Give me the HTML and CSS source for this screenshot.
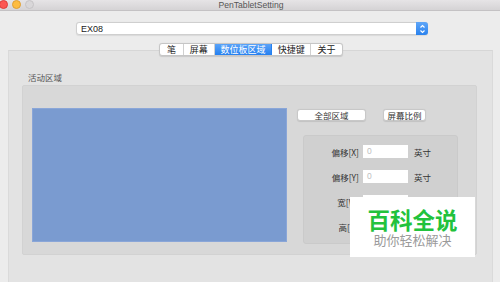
FILE: index.html
```html
<!DOCTYPE html>
<html lang="zh">
<head>
<meta charset="utf-8">
<link rel="stylesheet" href="styles.css">
</head>
<body>
<div class="window">
  <div class="titlebar">
    <div class="lights">
      <span class="light red"></span>
      <span class="light yellow"></span>
      <span class="light grey"></span>
    </div>
    <div class="title">PenTabletSetting</div>
    <div></div>
  </div>
  <div class="content">
    <div class="select">
      <span class="select-text">EX08</span>
      <span class="stepper">
        <svg width="11" height="12" viewBox="0 0 11 12"><path d="M3.5 4.5 L5.5 2.5 L7.5 4.5 M3.5 7.5 L5.5 9.5 L7.5 7.5" fill="none" stroke="#fff" stroke-width="1.1"/></svg>
      </span>
    </div>
    <div class="panel">
      <div class="tabs">
        <span class="tab t1">笔</span>
        <span class="tab t2">屏幕</span>
        <span class="tab t3 active">数位板区域</span>
        <span class="tab t4">快捷键</span>
        <span class="tab t5">关于</span>
      </div>
      <div class="group-label">活动区域</div>
      <div class="group">
        <div class="area"></div>
        <div class="side">
          <div class="buttons">
            <span class="btn b1">全部区域</span>
            <span class="btn b2">屏幕比例</span>
          </div>
          <div class="settings">
            <span class="lbl">偏移[X]</span><span class="inp">0</span><span class="unit">英寸</span>
            <span class="lbl">偏移[Y]</span><span class="inp">0</span><span class="unit">英寸</span>
            <span class="lbl">宽[W]</span><span class="inp"></span><span class="unit">英寸</span>
            <span class="lbl">高[H]</span><span class="inp"></span><span class="unit"></span>
          </div>
        </div>
      </div>
    </div>
  </div>
</div>
<div class="watermark">
  <div class="wm-main">百科全说</div>
  <div class="wm-sub">助你轻松解决</div>
</div>
</body>
</html>
```

FILE: styles.css
```css
* { box-sizing: border-box; }
html, body { margin: 0; padding: 0; }
body {
  width: 500px;
  height: 282px;
  overflow: hidden;
  background: #ececec;
  font-family: "Liberation Sans", "Noto Sans CJK SC", sans-serif;
  position: relative;
}
.window { width: 500px; height: 282px; }
.titlebar {
  height: 11px;
  display: grid;
  grid-template-columns: 1fr auto 1fr;
  align-items: center;
  background: linear-gradient(#e6e4e6, #d5d3d5);
  border-bottom: 1px solid #c4c2c4;
}
.lights { display: flex; gap: 4px; margin-left: -1px; align-items: center; margin-top: -1px; }
.light { width: 9px; height: 9px; border-radius: 50%; display: block; }
.red { background: #fc5753; border: 0.5px solid #de3d3a; }
.yellow { background: #fdbc40; border: 0.5px solid #de9f34; }
.grey { background: #d9d7d9; border: 0.5px solid #c6c4c6; }
.title {
  font-size: 8.6px;
  color: #555;
  margin-top: -1px;
  padding-left: 2px;
}
.content { padding-top: 11px; }
.select {
  margin-left: 76px;
  width: 352px;
  height: 13px;
  background: #fff;
  border: 1px solid #cfcfcf;
  border-radius: 3px;
  display: flex;
  align-items: center;
  justify-content: space-between;
  box-shadow: 0 0.5px 1px rgba(0,0,0,0.08);
}
.select-text { font-size: 9px; color: #222; padding-left: 4px; }
.stepper {
  width: 12px;
  height: 13px;
  margin-right: -1px;
  background: linear-gradient(#5fa6f8, #2a82ee);
  border-radius: 0 3px 3px 0;
  display: flex;
  align-items: center;
  justify-content: center;
}
.panel {
  margin: 15px 7px 0 8px;
  height: 240px;
  background: #e3e3e3;
  border-top: 1px solid #d6d6d6;
  border-left: 1px solid #dadada;
  border-right: 1px solid #dadada;
}
.tabs {
  margin: -8px 0 0 150px;
  display: flex;
  width: 184px;
  height: 13px;
  background: #fff;
  border: 1px solid #c6c6c6;
  border-radius: 3px;
  overflow: hidden;
  box-shadow: 0 0.5px 1px rgba(0,0,0,0.12);
}
.tab {
  font-family: "Noto Sans CJK SC", sans-serif;
  font-size: 9px;
  line-height: 11px;
  color: #222;
  text-align: center;
  border-right: 1px solid #d0d0d0;
}
.tab:last-child { border-right: none; }
.t1 { width: 24px; }
.t2 { width: 31px; }
.t3 { width: 58px; }
.t4 { width: 39px; }
.t5 { width: 31px; }
.tab.active { background: linear-gradient(#5aa3f8, #2580f0); color: #fff; border-right-color: #2580f0; }
.group-label {
  font-family: "Noto Sans CJK SC", sans-serif;
  font-size: 8.5px;
  color: #555;
  margin: 16px 0 0 19px;
  line-height: 10px;
}
.group {
  margin: 3px 0 0 13px;
  width: 455px;
  height: 170px;
  background: #d8d8d8;
  border: 1px solid #d2d2d2;
  border-radius: 2px;
  display: flex;
  padding: 22px 0 0 9px;
}
.area {
  width: 255px;
  height: 134px;
  background: #7a9bd0;
  border: 1px solid #8aa6d8;
}
.side { margin-left: 10px; display: flex; flex-direction: column; }
.buttons { display: flex; gap: 17px; margin-top: 1px; }
.btn {
  height: 12px;
  background: #fff;
  border: 1px solid #c8c8c8;
  border-radius: 3px;
  font-family: "Noto Sans CJK SC", sans-serif;
  font-size: 8.5px;
  line-height: 10px;
  color: #333;
  text-align: center;
  box-shadow: 0 0.5px 1px rgba(0,0,0,0.1);
}
.b1 { width: 69px; }
.b2 { width: 43px; }
.settings {
  margin: 14px 0 0 6px;
  width: 155px;
  height: 109px;
  background: #d0d0d0;
  border: 1px solid #cacaca;
  border-radius: 3px;
  display: grid;
  grid-template-columns: 55px 45px auto;
  column-gap: 4px;
  row-gap: 12px;
  align-content: start;
  align-items: center;
  padding-top: 9px;
}
.lbl {
  font-family: "Noto Sans CJK SC", sans-serif;
  font-size: 8.5px;
  color: #333;
  text-align: right;
}
.inp {
  height: 13px;
  background: #fff;
  font-size: 8.5px;
  line-height: 13px;
  color: #c0c0c0;
  padding-left: 4px;
}
.unit {
  font-family: "Noto Sans CJK SC", sans-serif;
  font-size: 8.5px;
  color: #333;
  padding-left: 2px;
}
.watermark {
  position: absolute;
  left: 350px;
  top: 197px;
  width: 125px;
  height: 60px;
  background: #fff;
  display: flex;
  flex-direction: column;
  align-items: center;
  font-family: "Noto Sans CJK SC", sans-serif;
}
.wm-main {
  font-size: 22.5px;
  font-weight: 700;
  color: #22c23c;
  line-height: 26px;
  margin-top: 9px;
}
.wm-sub {
  font-size: 13px;
  color: #9a9a9a;
  line-height: 16px;
}
```
